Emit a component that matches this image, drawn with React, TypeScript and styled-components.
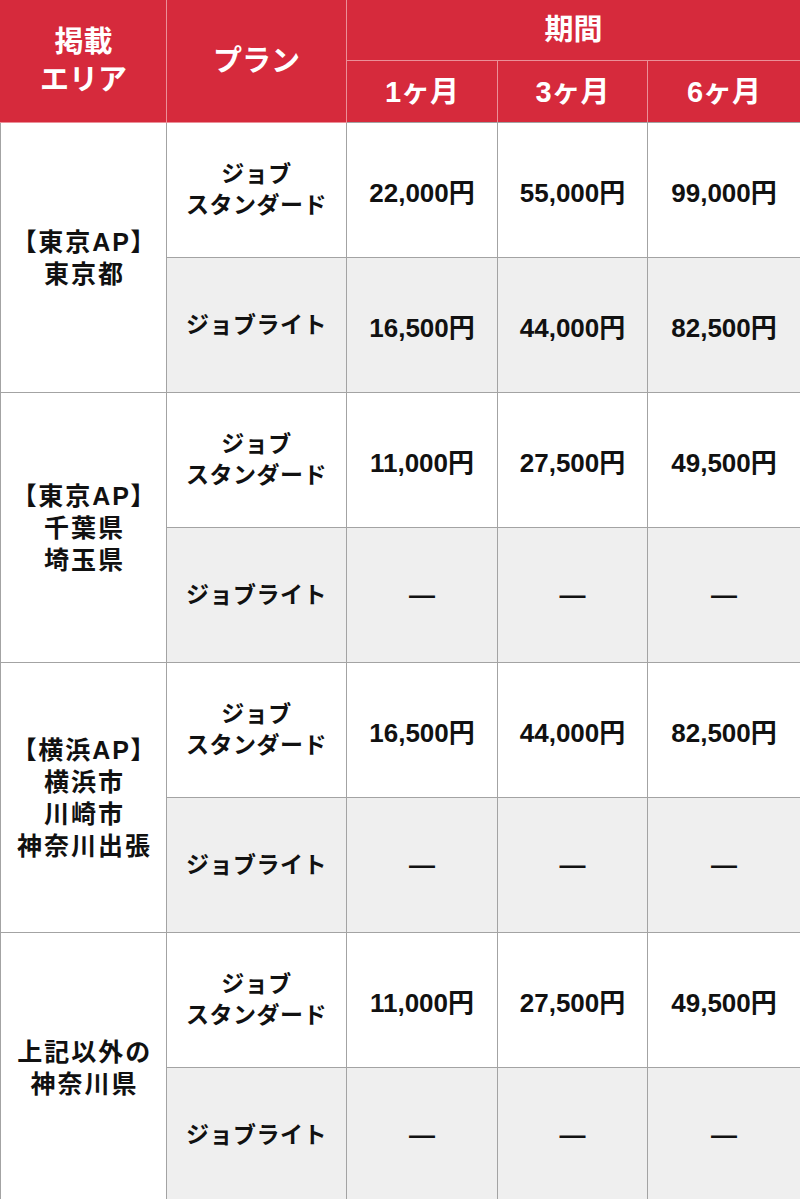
import React from 'react'
import styled, { createGlobalStyle } from 'styled-components'

const GlobalStyle = createGlobalStyle`
    html, body {
        margin: 0;
        padding: 0;
        background: #ffffff;
    }
    body {
        font-family: "Liberation Sans", "Noto Sans CJK JP", sans-serif;
    }
`

const RED = '#d62a3c'
const LINE = '#a3a3a3'
const HEAD_LINE = '#eb8f98'

const Table = styled.table`
    width: 800px;
    border-collapse: collapse;
    table-layout: fixed;
    font-weight: bold;
    color: #111111;
`

const HeadCell = styled.th<{ $tall?: boolean }>`
    background-color: ${RED};
    color: #ffffff;
    font-size: 29px;
    line-height: 38px;
    font-weight: bold;
    text-align: center;
    vertical-align: middle;
    padding: 0;
    height: ${(p) => (p.$tall ? '60px' : '61px')};
    border: 1px solid ${HEAD_LINE};
    border-top: none;
    &:first-child {
        border-left: 1px solid ${RED};
    }
    &:last-child {
        border-right: 1px solid ${RED};
    }
`

const HeadRow = styled.tr`
    &:last-child th {
        border-bottom: 1px solid ${LINE};
    }
`

const AreaCell = styled.td`
    background: #ffffff;
    font-size: 25px;
    line-height: 32px;
    letter-spacing: 2px;
    font-feature-settings: "palt";
    text-align: center;
    vertical-align: middle;
    padding: 0 0 0 2px;
    border: 1px solid ${LINE};
`

const Row = styled.tr<{ $grey?: boolean }>`
    height: 135px;
    background: ${(p) => (p.$grey ? '#efefef' : '#ffffff')};
`

const PlanCell = styled.td`
    font-size: 23px;
    line-height: 31px;
    letter-spacing: 0.5px;
    text-align: center;
    vertical-align: middle;
    padding: 0;
    border: 1px solid ${LINE};
`

const PriceCell = styled.td`
    font-size: 26px;
    text-align: center;
    vertical-align: middle;
    padding: 0;
    border: 1px solid ${LINE};
`

type Area = { lines: string[]; standard: string[]; lite: string[] }

const DASH = '—'

const areas: Area[] = [
    {
        lines: ['【東京AP】', '東京都'],
        standard: ['22,000円', '55,000円', '99,000円'],
        lite: ['16,500円', '44,000円', '82,500円']
    },
    {
        lines: ['【東京AP】', '千葉県', '埼玉県'],
        standard: ['11,000円', '27,500円', '49,500円'],
        lite: [DASH, DASH, DASH]
    },
    {
        lines: ['【横浜AP】', '横浜市', '川崎市', '神奈川出張'],
        standard: ['16,500円', '44,000円', '82,500円'],
        lite: [DASH, DASH, DASH]
    },
    {
        lines: ['上記以外の', '神奈川県'],
        standard: ['11,000円', '27,500円', '49,500円'],
        lite: [DASH, DASH, DASH]
    }
]

const Lines = ({ items }: { items: string[] }) => (
    <>
        {items.map((t, i) => (
            <div key={i}>{t}</div>
        ))}
    </>
)

export default function App() {
    return (
        <>
            <GlobalStyle />
            <Table>
                <colgroup>
                    <col style={{ width: 166 }} />
                    <col style={{ width: 180 }} />
                    <col style={{ width: 151 }} />
                    <col style={{ width: 150 }} />
                    <col style={{ width: 153 }} />
                </colgroup>
                <thead>
                    <HeadRow>
                        <HeadCell rowSpan={2}>
                            <Lines items={['掲載', 'エリア']} />
                        </HeadCell>
                        <HeadCell rowSpan={2}>プラン</HeadCell>
                        <HeadCell colSpan={3} $tall>
                            期間
                        </HeadCell>
                    </HeadRow>
                    <HeadRow>
                        <HeadCell>1ヶ月</HeadCell>
                        <HeadCell>3ヶ月</HeadCell>
                        <HeadCell>6ヶ月</HeadCell>
                    </HeadRow>
                </thead>
                <tbody>
                    {areas.map((a, i) => (
                        <React.Fragment key={i}>
                            <Row>
                                <AreaCell rowSpan={2}>
                                    <Lines items={a.lines} />
                                </AreaCell>
                                <PlanCell>
                                    <Lines items={['ジョブ', 'スタンダード']} />
                                </PlanCell>
                                {a.standard.map((p, j) => (
                                    <PriceCell key={j}>{p}</PriceCell>
                                ))}
                            </Row>
                            <Row $grey>
                                <PlanCell>ジョブライト</PlanCell>
                                {a.lite.map((p, j) => (
                                    <PriceCell key={j}>{p}</PriceCell>
                                ))}
                            </Row>
                        </React.Fragment>
                    ))}
                </tbody>
            </Table>
        </>
    )
}
